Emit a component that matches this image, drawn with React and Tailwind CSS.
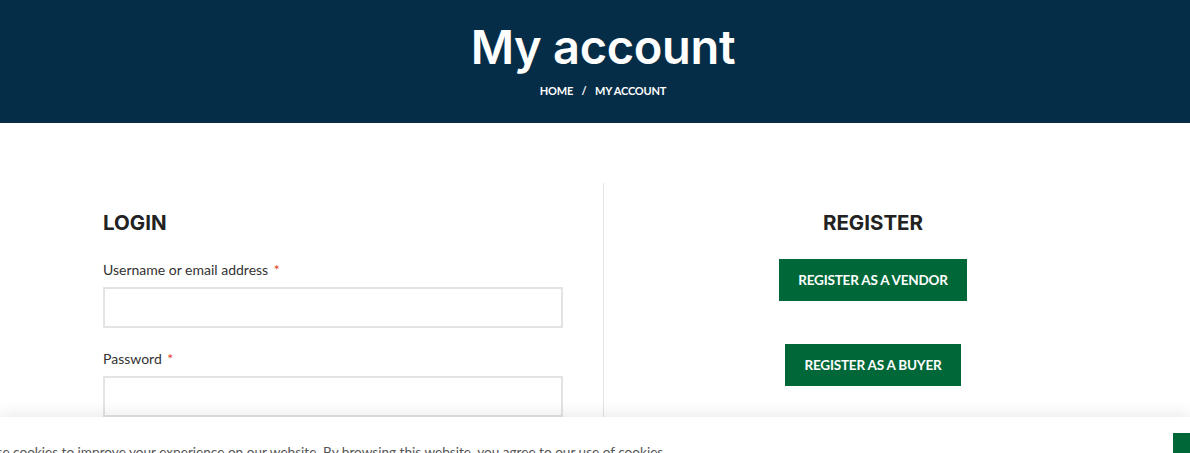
import React from 'react';

const heading = { fontFamily: 'Inter, "Noto Sans", sans-serif' };
const body = { fontFamily: 'Lato, Roboto, "Liberation Sans", sans-serif' };

const Field = ({ label }) => (
  <div className="mb-[21px]">
    <label className="block text-[14px] text-[#333] leading-[20px] mb-[7px]">
      {label} <span className="text-[#e2401c] ml-[2px]">*</span>
    </label>
    <input type="text" className="block w-[460px] h-[41px] border-2 border-[#e3e3e3] bg-white outline-none" />
  </div>
);

const App = () => {
  return (
    <div className="relative w-[1190px] h-[453px] overflow-hidden bg-white" style={body}>
      {/* Page title */}
      <div className="h-[123px] bg-[#062d47] flex flex-col items-center pt-[19px] pl-[16px]">
        <h1 className="text-[47px] font-semibold text-white leading-[56px] tracking-[-0.3px]" style={heading}>
          My account
        </h1>
        <div className="mt-[8px] text-[11px] font-bold text-white tracking-[-0.2px]">
          HOME <span className="mx-[6px]">/</span> MY ACCOUNT
        </div>
      </div>

      {/* Login / register */}
      <div className="flex pl-[63px] pt-[60px]">
        <div className="w-[541px] px-[40px] pt-[27px] border-r border-[#e5e5e5]">
          <h2 className="text-[20.5px] font-bold text-[#222] leading-[26px] mb-[24px]" style={heading}>
            LOGIN
          </h2>
          <Field label="Username or email address" />
          <Field label="Password" />
          <div className="h-[40px]" />
        </div>
        <div className="w-[538px] flex flex-col items-center pt-[27px]">
          <h2 className="text-[20.5px] font-bold text-[#222] leading-[26px] mb-[23px]" style={heading}>
            REGISTER
          </h2>
          <button className="w-[188px] h-[42px] bg-[#006838] text-white text-[13.5px] font-bold tracking-[-0.2px]">
            REGISTER AS A VENDOR
          </button>
          <button className="mt-[43px] w-[176px] h-[42px] bg-[#006838] text-white text-[13.5px] font-bold tracking-[-0.2px]">
            REGISTER AS A BUYER
          </button>
        </div>
      </div>

      {/* Cookie notice */}
      <div className="absolute left-0 right-0 top-[417px] h-[60px] bg-white shadow-[0_-4px_14px_rgba(0,0,0,0.08)] flex items-start">
        <p className="ml-[-35px] mt-[25px] text-[13.6px] text-[#555] whitespace-nowrap">
          We use cookies to improve your experience on our website. By browsing this website, you agree to our use of cookies.
        </p>
        <button className="absolute left-[1173px] top-[16px] w-[80px] h-[36px] bg-[#006838]" />
      </div>
    </div>
  );
};

export default App;
